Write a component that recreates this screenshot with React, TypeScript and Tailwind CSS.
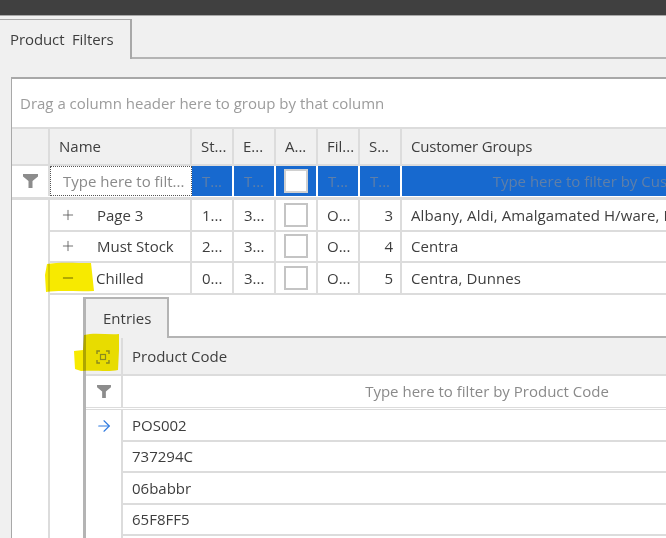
import React from 'react';
import { Plus, Minus, ArrowRight } from 'lucide-react';

const columns = 'grid grid-cols-[142px_42px_42px_42px_42px_42px_452px]';

const rows = [
  { name: 'Page 3', open: false, st: '1...', en: '3...', fil: 'O...', seq: '3', groups: 'Albany, Aldi, Amalgamated H/ware, Barry' },
  { name: 'Must Stock', open: false, st: '2...', en: '3...', fil: 'O...', seq: '4', groups: 'Centra' },
  { name: 'Chilled', open: true, st: '0...', en: '3...', fil: 'O...', seq: '5', groups: 'Centra, Dunnes' },
];

const entries = ['POS002', '737294C', '06babbr', '65F8FF5'];

const Funnel = ({ size = 15 }: { size?: number }) => (
  <svg width={size} height={size - 1} viewBox="0 0 15 14" className="fill-[#8c8c8c]">
    <path d="M0 0H15V2.5L9.5 7V14H5.5V7L0 2.5Z" />
  </svg>
);

const Cell = ({ children, className = '' }: { children?: React.ReactNode; className?: string }) => (
  <div className={`flex items-center overflow-hidden whitespace-nowrap border-r-2 border-[#dcdcdc] ${className}`}>
    {children}
  </div>
);

const Check = ({ className = '' }: { className?: string }) => (
  <div className={`h-[24px] w-[24px] border-2 ${className}`} />
);

const App = () => {
  const headers = ['Name', 'St...', 'E...', 'A...', 'Fil...', 'S...', 'Customer Groups'];

  return (
    <div className="relative flex h-[538px] w-[666px] flex-col overflow-hidden bg-[#f0f0f0] font-['Open_Sans','Noto_Sans',sans-serif] text-[15px] text-[#3e3e3e] blur-[0.35px]">
      <div className="h-[16px] flex-none border-b border-[#a8a8a8] bg-[#404040]" />

      <div className="mt-[3px] flex h-[40px] flex-none">
        <div className="flex w-[132px] items-center border-t border-r-2 border-[#a8a8a8] pl-[10px] tracking-[-0.1px]">Product&nbsp; Filters</div>
        <div className="flex-1 border-b-2 border-[#b4b4b4]" />
      </div>

      <div className="mt-[18px] ml-[11px] flex min-h-0 flex-1 flex-col border-t-2 border-l border-[#a8a8a8] bg-white">
        <div className="flex h-[48px] flex-none items-center pl-[8px] text-[#9c9c9c]">Drag a column header here to group by that column</div>

        <div className="flex h-[39px] flex-none border-y-2 border-[#dcdcdc] bg-[#f0f0f0]">
          <Cell className="w-[38px] flex-none" />
          <div className={columns}>
            {headers.map((h, i) => (
              <Cell key={h} className={i === 6 ? 'pl-[9px] tracking-[-0.2px]' : 'pl-[9px]'}>{h}</Cell>
            ))}
          </div>
        </div>

        <div className="flex h-[30px] flex-none">
          <Cell className="w-[38px] flex-none justify-center"><Funnel /></Cell>
          <div className={columns}>
            <div className="flex items-center overflow-hidden whitespace-nowrap border border-dotted border-[#555] pl-[12px] text-[#8a8a8a]">Type here to filt...</div>
            {['T...', 'T...'].map((t, i) => (
              <Cell key={i} className="justify-center border-white bg-[#1769cf] text-[#5f7fa8]">{t}</Cell>
            ))}
            <Cell className="justify-center border-white bg-[#1769cf]"><Check className="border-[#d0d0d0] bg-white" /></Cell>
            {['T...', 'T...'].map((t, i) => (
              <Cell key={i} className="justify-center border-white bg-[#1769cf] text-[#5f7fa8]">{t}</Cell>
            ))}
            <Cell className="justify-center border-white bg-[#1769cf] pl-[4px] text-[#5f7fa8]">Type here to filter by Customer Groups</Cell>
          </div>
        </div>

        <div className="mt-px flex min-h-0 flex-1">
          <div className="w-[38px] flex-none border-t-[3px] border-r-2 border-[#dcdcdc]" />
          <div className="flex min-w-0 flex-1 flex-col">
            <div className="border-t-[3px] border-[#dcdcdc]">
              {rows.map(r => (
                <div key={r.name} className={`${columns} h-[31.5px] border-b-2 border-[#dcdcdc]`}>
                  <Cell className="pl-[10px]">
                    {r.open ? <Minus size={16} strokeWidth={1.25} className="text-[#555]" /> : <Plus size={16} strokeWidth={1.25} className="text-[#555]" />}
                    <span className={r.open ? 'ml-[20px]' : 'ml-[21px]'}>{r.name}</span>
                  </Cell>
                  <Cell className="pl-[10px]">{r.st}</Cell>
                  <Cell className="pl-[10px]">{r.en}</Cell>
                  <Cell className="justify-center"><Check className="border-[#c4c4c4]" /></Cell>
                  <Cell className="pl-[9px]">{r.fil}</Cell>
                  <Cell className="justify-end pr-[7px]">{r.seq}</Cell>
                  <Cell className="pl-[9px] tracking-[0.1px]">{r.groups}</Cell>
                </div>
              ))}
            </div>

            <div className="flex min-h-0 flex-1 pl-[33px] pt-[2.5px]">
              <div className="flex w-[768px] flex-none flex-col border-l-[3px] border-[#b4b4b4]">
                <div className="flex h-[41px] flex-none">
                  <div className="flex w-[83px] items-center border-t-2 border-r-2 border-[#b4b4b4] bg-[#f0f0f0] pl-[17px]">Entries</div>
                  <div className="flex-1 border-b-2 border-[#b4b4b4]" />
                </div>

                <div className="flex h-[38px] flex-none border-b-2 border-[#dcdcdc] bg-[#f0f0f0]">
                  <Cell className="w-[37px] flex-none" />
                  <div className="flex items-center pl-[9px]">Product Code</div>
                </div>

                <div className="flex h-[31px] flex-none">
                  <Cell className="w-[37px] flex-none justify-center"><Funnel size={14} /></Cell>
                  <div className="flex w-[731px] items-center justify-center whitespace-nowrap text-[#8a8a8a]">Type here to filter by Product Code</div>
                </div>

                <div className="h-[3px] flex-none border-y border-[#dcdcdc]" />

                <div className="flex min-h-0 flex-1">
                  <div className="flex w-[37px] flex-none justify-center border-r-2 border-[#dcdcdc] pt-[7px]">
                    <ArrowRight size={18} strokeWidth={1.5} className="text-[#2f7ae0]" />
                  </div>
                  <div className="flex-1">
                    {entries.map(e => (
                      <div key={e} className="flex h-[31.5px] items-center border-b-2 border-[#dcdcdc] pl-[9px]">{e}</div>
                    ))}
                  </div>
                </div>
              </div>
            </div>
          </div>
        </div>
      </div>

      {/* highlighter marks drawn over the screenshot */}
      <svg width="52" height="32" viewBox="0 0 52 32" className="absolute top-[261px] left-[44px] fill-[#f7ea00] mix-blend-multiply">
        <path d="M3 3C14 1 30 2 47 2L48 11L50 30C34 31 16 29 2 31L1 14Z" />
      </svg>
      <svg width="48" height="41" viewBox="0 0 48 41" className="absolute top-[332px] left-[73px] fill-[#f7ea00] mix-blend-multiply">
        <path d="M11 3C22 0 34 3 46 2L46 18L45 38C36 40 22 38 8 39L2 37L1 19L10 18Z" />
      </svg>
      <svg width="14" height="14" viewBox="0 0 14 14" className="absolute top-[350px] left-[96px] fill-none stroke-[#8a8a1e]">
        <path d="M1 4V1H4M10 1H13V4M13 10V13H10M4 13H1V10" strokeWidth="1.4" />
        <rect x="4.5" y="4.5" width="5" height="5" strokeWidth="1.2" />
      </svg>
    </div>
  );
};

export default App;
